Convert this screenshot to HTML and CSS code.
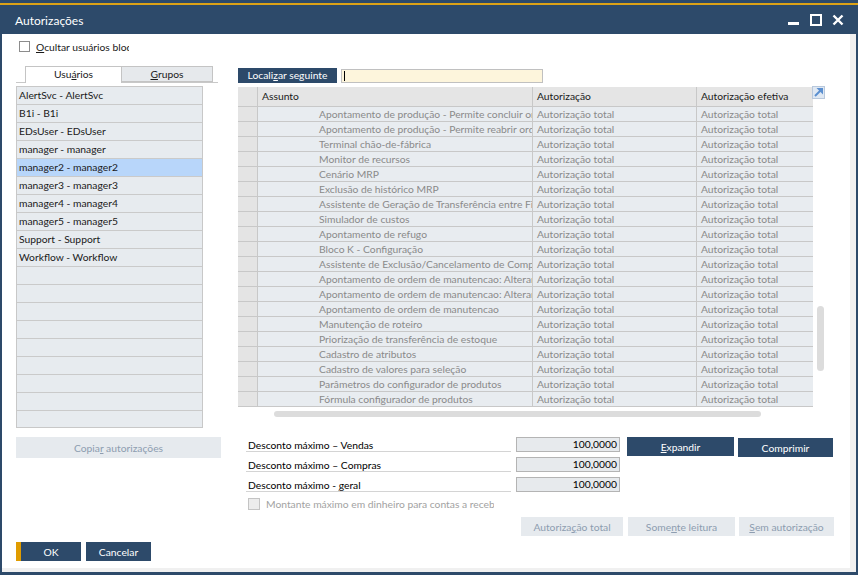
FILE: index.html
```html
<!DOCTYPE html>
<html lang="pt">
<head>
<meta charset="utf-8">
<title>Autorizações</title>
<link rel="stylesheet" href="styles.css">
</head>
<body>
<div class="window">
  <div class="accent"></div>
  <div class="titlebar">
    <span class="title">Autorizações</span>
    <div class="controls">
      <svg class="ctl" width="12" height="12" viewBox="0 0 12 12"><rect x="0" y="8" width="11" height="3" fill="#fff"/></svg>
      <svg class="ctl" width="12" height="12" viewBox="0 0 12 12"><rect x="1" y="1" width="10" height="10" fill="none" stroke="#fff" stroke-width="2"/></svg>
      <svg class="ctl" width="12" height="12" viewBox="0 0 12 12"><path d="M1.5 1.5 L10.5 10.5 M10.5 1.5 L1.5 10.5" stroke="#fff" stroke-width="2.4"/></svg>
    </div>
  </div>
  <div class="body">
    <label class="hidecheck"><span class="box"></span><span class="hidetext"><u>O</u>cultar usuários bloqueados</span></label>
    <div class="main">
      <div class="left">
        <div class="tabs">
          <div class="tab active"><span>Usu<u>á</u>rios</span></div>
          <div class="tab"><span><u>G</u>rupos</span></div>
        </div>
        <div class="list">
          <div class="li">AlertSvc - AlertSvc</div>
          <div class="li">B1i - B1i</div>
          <div class="li">EDsUser - EDsUser</div>
          <div class="li">manager - manager</div>
          <div class="li sel">manager2 - manager2</div>
          <div class="li">manager3 - manager3</div>
          <div class="li">manager4 - manager4</div>
          <div class="li">manager5 - manager5</div>
          <div class="li">Support - Support</div>
          <div class="li">Workflow - Workflow</div>
          <div class="li"></div>
          <div class="li"></div>
          <div class="li"></div>
          <div class="li"></div>
          <div class="li"></div>
          <div class="li"></div>
          <div class="li"></div>
          <div class="li"></div>
          <div class="li last"></div>
        </div>
        <div class="btn light copy"><span>Copia<u>r</u> autorizações</span></div>
      </div>
      <div class="right">
        <div class="search">
          <div class="btn dark find"><span>Locali<u>z</u>ar seguinte</span></div>
          <div class="input"><span class="caret"></span></div>
        </div>
        <div class="gridwrap">
          <div class="grid">
            <div class="gr head">
              <div class="c sel"></div>
              <div class="c">Assunto</div>
              <div class="c">Autorização</div>
              <div class="c">Autorização efetiva</div>
            </div>
            <div class="gr"><div class="c sel"></div><div class="c subj">Apontamento de produção - Permite concluir ordens</div><div class="c">Autorização total</div><div class="c">Autorização total</div></div>
            <div class="gr"><div class="c sel"></div><div class="c subj">Apontamento de produção - Permite reabrir ordens</div><div class="c">Autorização total</div><div class="c">Autorização total</div></div>
            <div class="gr"><div class="c sel"></div><div class="c subj">Terminal chão-de-fábrica</div><div class="c">Autorização total</div><div class="c">Autorização total</div></div>
            <div class="gr"><div class="c sel"></div><div class="c subj">Monitor de recursos</div><div class="c">Autorização total</div><div class="c">Autorização total</div></div>
            <div class="gr"><div class="c sel"></div><div class="c subj">Cenário MRP</div><div class="c">Autorização total</div><div class="c">Autorização total</div></div>
            <div class="gr"><div class="c sel"></div><div class="c subj">Exclusão de histórico MRP</div><div class="c">Autorização total</div><div class="c">Autorização total</div></div>
            <div class="gr"><div class="c sel"></div><div class="c subj">Assistente de Geração de Transferência entre Filiais</div><div class="c">Autorização total</div><div class="c">Autorização total</div></div>
            <div class="gr"><div class="c sel"></div><div class="c subj">Simulador de custos</div><div class="c">Autorização total</div><div class="c">Autorização total</div></div>
            <div class="gr"><div class="c sel"></div><div class="c subj">Apontamento de refugo</div><div class="c">Autorização total</div><div class="c">Autorização total</div></div>
            <div class="gr"><div class="c sel"></div><div class="c subj">Bloco K - Configuração</div><div class="c">Autorização total</div><div class="c">Autorização total</div></div>
            <div class="gr"><div class="c sel"></div><div class="c subj">Assistente de Exclusão/Cancelamento de Compras</div><div class="c">Autorização total</div><div class="c">Autorização total</div></div>
            <div class="gr"><div class="c sel"></div><div class="c subj">Apontamento de ordem de manutencao: Alterar</div><div class="c">Autorização total</div><div class="c">Autorização total</div></div>
            <div class="gr"><div class="c sel"></div><div class="c subj">Apontamento de ordem de manutencao: Alterar</div><div class="c">Autorização total</div><div class="c">Autorização total</div></div>
            <div class="gr"><div class="c sel"></div><div class="c subj">Apontamento de ordem de manutencao</div><div class="c">Autorização total</div><div class="c">Autorização total</div></div>
            <div class="gr"><div class="c sel"></div><div class="c subj">Manutenção de roteiro</div><div class="c">Autorização total</div><div class="c">Autorização total</div></div>
            <div class="gr"><div class="c sel"></div><div class="c subj">Priorização de transferência de estoque</div><div class="c">Autorização total</div><div class="c">Autorização total</div></div>
            <div class="gr"><div class="c sel"></div><div class="c subj">Cadastro de atributos</div><div class="c">Autorização total</div><div class="c">Autorização total</div></div>
            <div class="gr"><div class="c sel"></div><div class="c subj">Cadastro de valores para seleção</div><div class="c">Autorização total</div><div class="c">Autorização total</div></div>
            <div class="gr"><div class="c sel"></div><div class="c subj">Parâmetros do configurador de produtos</div><div class="c">Autorização total</div><div class="c">Autorização total</div></div>
            <div class="gr"><div class="c sel"></div><div class="c subj">Fórmula configurador de produtos</div><div class="c">Autorização total</div><div class="c">Autorização total</div></div>
          </div>
          <svg class="expand" width="13" height="13" viewBox="0 0 13 13"><rect x="0.5" y="0.5" width="12" height="12" fill="#dfe8f3" stroke="#b8c8dc"/><path d="M3 10 L9 4" stroke="#5b8fd0" stroke-width="2"/><polygon points="4.5,2 11,2 11,8.5" fill="#5b8fd0"/></svg>
          <div class="vscroll"></div>
        </div>
        <div class="hscroll"></div>
        <div class="form">
          <div class="form-top">
            <div class="fields">
              <div class="frow"><div class="flabel">Desconto máximo – Vendas</div><div class="fval">100,0000</div></div>
              <div class="frow"><div class="flabel">Desconto máximo – Compras</div><div class="fval">100,0000</div></div>
              <div class="frow"><div class="flabel">Desconto máximo - <u>g</u>eral</div><div class="fval">100,0000</div></div>
            </div>
            <div class="btn dark expandir"><span><u>E</u>xpandir</span></div>
            <div class="btn dark comprimir"><span>Comprimir</span></div>
          </div>
          <div class="checkrow"><span class="box dis"></span><span class="checktext">Montante máximo em dinheiro para contas a receber</span></div>
          <div class="perms">
            <div class="btn light p1"><span>Autoriza<u>ç</u>ão total</span></div>
            <div class="btn light p2"><span>Some<u>n</u>te leitura</span></div>
            <div class="btn light p3"><span><u>S</u>em autorização</span></div>
          </div>
        </div>
      </div>
    </div>
    <div class="footer">
      <div class="btn dark ok"><span>OK</span></div>
      <div class="btn dark cancel"><span>Cancelar</span></div>
    </div>
  </div>
</div>
</body>
</html>
```
FILE: styles.css
```css
html, body {
  margin: 0;
  padding: 0;
  background: #ffffff;
}
body {
  font-family: "Lato", "Liberation Sans", sans-serif;
  font-size: 10.3px;
  color: #1a1a1a;
}
u { text-decoration: underline; text-underline-offset: 1px; }

.window {
  width: 858px;
  height: 575px;
  box-sizing: border-box;
  background: #2d4a6a;
  padding: 3px 2px 3px 2px;
  display: flex;
  flex-direction: column;
}
.accent {
  height: 2px;
  background: #dca216;
  margin: 0 -2px;
}
.titlebar {
  height: 29px;
  display: flex;
  align-items: center;
  justify-content: space-between;
  color: #ffffff;
}
.title {
  font-size: 12px;
  padding-left: 13px;
  padding-top: 1px;
}
.controls {
  display: flex;
  align-items: center;
  gap: 10px;
  padding-right: 12px;
}
.ctl { display: block; }

.body {
  flex: 1;
  background: #ffffff;
  border-right: 6px solid #f0f0f0;
  border-bottom: 4px solid #f0f0f0;
  padding: 6px 0 0 14px;
  display: flex;
  flex-direction: column;
}

.hidecheck {
  display: flex;
  align-items: center;
  margin-left: 3px;
  height: 13px;
}
.box {
  width: 11px;
  height: 11px;
  border: 1px solid #8c8c8c;
  background: #fff;
  box-sizing: border-box;
  flex: none;
}
.box.dis { border-color: #c4c4c4; background: #ececec; width: 12px; height: 12px; }
.hidetext {
  margin-left: 6px;
  width: 93px;
  overflow: hidden;
  white-space: nowrap;
}

.main {
  display: flex;
  margin-top: 13px;
}
.left { width: 205px; }
.tabs {
  width: 193px;
  height: 16px;
  border-bottom: 1px solid #c8c8c8;
  display: flex;
  padding-left: 9px;
  box-sizing: content-box;
}
.tab {
  height: 16px;
  box-sizing: border-box;
  border: 1px solid #c4c4c4;
  border-bottom: none;
  background: #e6e9ec;
  text-align: center;
  line-height: 15px;
}
.tab.active {
  width: 97px;
  background: #ffffff;
  height: 17px;
}
.tab:not(.active) {
  width: 91px;
  border-left: none;
  border-bottom: 1px solid #c4c4c4;
}
.list {
  margin-top: 3px;
  width: 187px;
  height: 342px;
  box-sizing: border-box;
  border: 1px solid #c8c8c8;
  background: #e7ebef;
  overflow: hidden;
}
.li {
  height: 18px;
  box-sizing: border-box;
  border-bottom: 1px solid #cacaca;
  padding-left: 2px;
  line-height: 17px;
  white-space: nowrap;
}
.li.sel { background: #b8d6fa; }
.li.last { border-bottom: none; }

.btn {
  box-sizing: border-box;
  display: flex;
  align-items: center;
  justify-content: center;
  white-space: nowrap;
}
.btn.dark { background: #2d4a6a; color: #ffffff; }
.btn.light { background: #e6eaee; color: #8d9db0; }
.copy {
  margin-top: 9px;
  width: 205px;
  height: 21px;
}

.right {
  margin-left: 17px;
  width: 596px;
}
.search {
  margin-top: 2px;
  display: flex;
  align-items: flex-start;
}
.find {
  width: 99px;
  height: 15px;
  padding-bottom: 1px;
}
.input {
  margin-left: 4px;
  margin-top: 1px;
  width: 202px;
  height: 14px;
  box-sizing: border-box;
  border: 1px solid #c0c0c0;
  background: #fdf5dc;
  padding: 1px 0 0 2px;
}
.caret {
  display: block;
  width: 1px;
  height: 10px;
  background: #000;
}

.gridwrap {
  position: relative;
  margin-top: 4px;
  height: 320px;
}
.grid {
  width: 575px;
}
.gr {
  display: grid;
  grid-template-columns: 20px 275px 164px 116px;
  height: 15px;
  box-sizing: border-box;
  border-bottom: 1px solid #c8c8c8;
  background: #e8ecf0;
  color: #8a8a8a;
}
.gr.head {
  height: 20px;
  background: #e5e5e5;
  color: #1a1a1a;
}
.c {
  box-sizing: border-box;
  border-right: 1px solid #c8c8c8;
  padding-left: 4px;
  line-height: 14px;
  overflow: hidden;
  white-space: nowrap;
}
.gr.head .c { line-height: 19px; padding-left: 4px; }
.c:last-child { border-right: none; }
.c.sel { background: #e4e4e4; padding: 0; }
.c.subj { padding-left: 61px; }
.expand {
  position: absolute;
  left: 574px;
  top: -1px;
}
.vscroll {
  position: absolute;
  left: 579px;
  top: 219px;
  width: 7px;
  height: 65px;
  border-radius: 4px;
  background: #dcdcdc;
}
.hscroll {
  margin-top: 4px;
  margin-left: 36px;
  width: 487px;
  height: 6px;
  border-radius: 3px;
  background: #dcdcdc;
}

.form { margin-top: 20px; }
.form-top {
  display: flex;
  align-items: flex-start;
}
.fields {
  margin-left: 8px;
  width: 374px;
}
.frow {
  display: flex;
  height: 20px;
}
.flabel {
  width: 265px;
  height: 15px;
  box-sizing: border-box;
  border-bottom: 1px solid #d4d4d4;
  padding-left: 2px;
  line-height: 15px;
  padding-top: 1px;
  color: #000;
}
.fval {
  margin-left: 5px;
  width: 104px;
  height: 15px;
  box-sizing: border-box;
  border: 1px solid #b4b4b4;
  background: #e7eaed;
  text-align: right;
  padding-right: 2px;
  line-height: 13px;
  color: #000;
}
.expandir {
  margin-left: 7px;
  width: 107px;
  height: 19px;
}
.comprimir {
  margin-left: 4px;
  margin-top: 1px;
  width: 95px;
  height: 19px;
}
.checkrow {
  display: flex;
  align-items: center;
  margin-left: 10px;
  margin-top: 1px;
  height: 12px;
}
.checktext {
  margin-left: 6px;
  width: 228px;
  overflow: hidden;
  white-space: nowrap;
  color: #a2a2a2;
}
.perms {
  display: flex;
  margin-top: 7px;
  margin-left: 283px;
  height: 19px;
}
.p1 { width: 102px; }
.p2 { width: 107px; margin-left: 5px; }
.p3 { width: 95px; margin-left: 4px; }

.footer {
  display: flex;
  margin-top: 6px;
}
.ok {
  width: 65px;
  height: 19px;
  border-left: 5px solid #e09c00;
}
.cancel {
  width: 65px;
  height: 19px;
  margin-left: 5px;
}
```
